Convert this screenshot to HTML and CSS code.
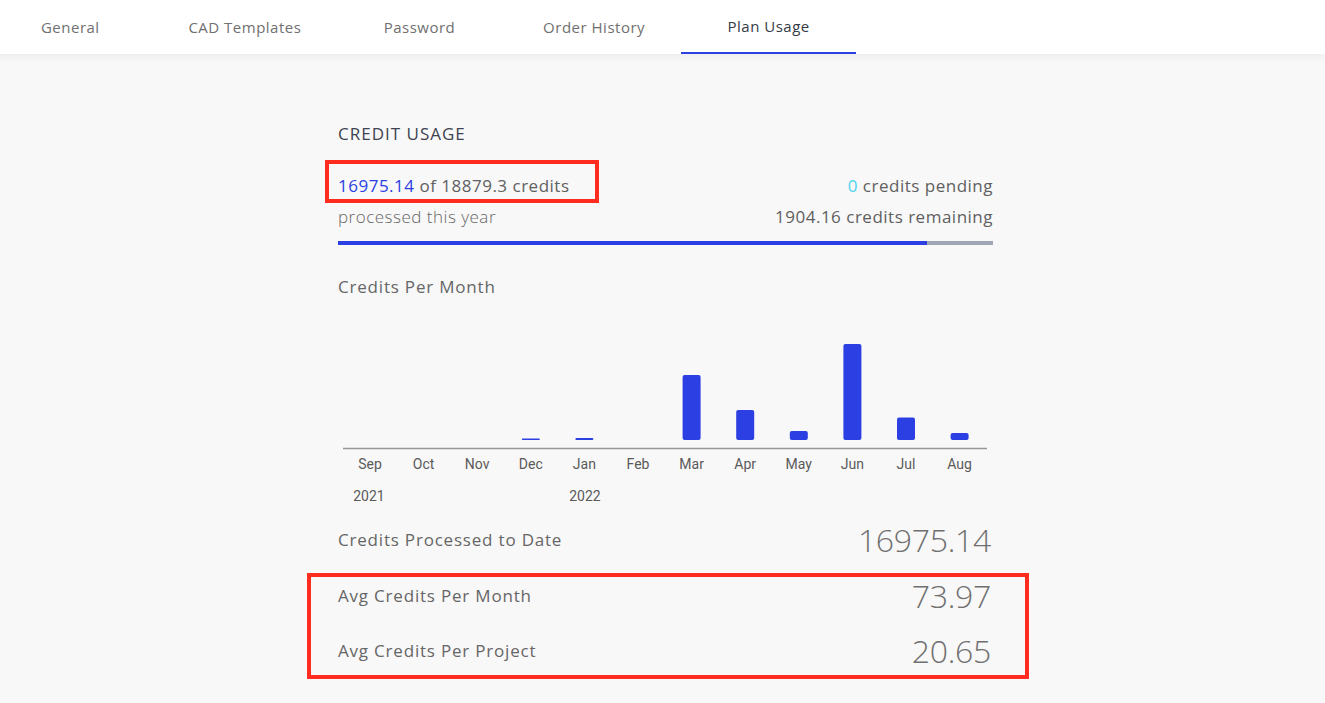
FILE: index.html
```html
<!DOCTYPE html>
<html lang="en">
<head>
<meta charset="UTF-8">
<meta name="viewport" content="width=device-width, initial-scale=1.0">
<title>Account Settings - Plan Usage</title>
<link rel="stylesheet" href="styles.css">
</head>
<body>

<nav class="tabs">
    <a class="tab">General</a>
    <a class="tab">CAD Templates</a>
    <a class="tab">Password</a>
    <a class="tab">Order History</a>
    <a class="tab active">Plan Usage</a>
</nav>

<main class="usage">
    <h2 class="usage-title">CREDIT USAGE</h2>

    <div class="summary-row">
        <span class="marked marked-small"><span class="used">16975.14</span> of 18879.3 credits</span>
        <span><span class="pending">0</span> credits pending</span>
    </div>
    <div class="summary-row sub">
        <span class="light">processed this year</span>
        <span>1904.16 credits remaining</span>
    </div>

    <div class="progress">
        <div class="progress-fill" style="width: 89.9%"></div>
    </div>

    <h3 class="chart-title">Credits Per Month</h3>

    <svg class="chart" width="655" height="185" viewBox="0 0 655 185">
        <g fill="#2c3fe3">
            <rect x="183.8" y="108.5" width="18" height="1.5" rx="0.7"/>
            <rect x="237.4" y="108" width="18" height="2" rx="1"/>
            <rect x="344.6" y="45" width="18" height="65" rx="2"/>
            <rect x="398.2" y="80" width="18" height="30" rx="2"/>
            <rect x="451.8" y="101" width="18" height="9" rx="2"/>
            <rect x="505.4" y="14" width="18" height="96" rx="2"/>
            <rect x="559" y="87.5" width="18" height="22.5" rx="2"/>
            <rect x="612.6" y="103" width="18" height="7" rx="2"/>
        </g>
        <line x1="5" y1="118.5" x2="649" y2="118.5" stroke="#999" stroke-width="1.5"/>
        <g class="axis-labels" text-anchor="middle">
            <text x="32" y="139">Sep</text>
            <text x="85.6" y="139">Oct</text>
            <text x="139.2" y="139">Nov</text>
            <text x="192.8" y="139">Dec</text>
            <text x="246.4" y="139">Jan</text>
            <text x="300" y="139">Feb</text>
            <text x="353.6" y="139">Mar</text>
            <text x="407.2" y="139">Apr</text>
            <text x="460.8" y="139">May</text>
            <text x="514.4" y="139">Jun</text>
            <text x="568" y="139">Jul</text>
            <text x="621.6" y="139">Aug</text>
            <text x="31" y="171">2021</text>
            <text x="247" y="171">2022</text>
        </g>
    </svg>

    <div class="stat">
        <span class="stat-label">Credits Processed to Date</span>
        <span class="stat-value">16975.14</span>
    </div>

    <div class="marked marked-wide">
        <div class="stat">
            <span class="stat-label">Avg Credits Per Month</span>
            <span class="stat-value">73.97</span>
        </div>
        <div class="stat">
            <span class="stat-label">Avg Credits Per Project</span>
            <span class="stat-value">20.65</span>
        </div>
    </div>
</main>

</body>
</html>
```

FILE: styles.css
```css
body {
    margin: 0;
    background: #f8f8f8;
    font-family: "Open Sans", Arial, sans-serif;
    color: #666;
    overflow: hidden;
}

/* top tab bar */
.tabs {
    display: flex;
    height: 54px;
    margin-left: -17px;
    background: #fff;
    box-shadow: 0 3px 8px rgba(0, 0, 0, 0.05);
    position: relative;
}

.tab {
    width: 174.6px;
    box-sizing: border-box;
    text-align: center;
    line-height: 54px;
    font-size: 15px;
    letter-spacing: 0.5px;
    color: #707070;
    cursor: pointer;
}

.tab.active {
    color: #333a45;
    border-bottom: 2px solid #2c3fe3;
    line-height: 52px;
}

.usage {
    width: 655px;
    margin-left: 338px;
    padding-top: 68px;
}

.usage-title {
    margin: 0;
    font-size: 17px;
    font-weight: 500;
    line-height: 24px;
    color: #3d4350;
    letter-spacing: 1px;
}

.summary-row {
    display: flex;
    justify-content: space-between;
    align-items: baseline;
    font-size: 17px;
    font-weight: 500;
    letter-spacing: 0.5px;
    color: #606060;
    margin-top: 14px;
}

.summary-row.sub {
    margin-top: 0;
    line-height: 28px;
}

.light {
    font-weight: 300;
    color: #666;
}

.used {
    color: #2c3fe3;
}

.pending {
    color: #4fd2ee;
}

/* red outline marks */
.marked {
    border: 4px solid #ff2c1f;
}

.marked-small {
    display: inline-block;
    margin-left: -13px;
    padding: 10px 25px 2px 9px;
    line-height: 23px;
}

.marked-wide {
    margin: 16px -36px 0 -31px;
    padding: 0 32px 7px 27px;
}

.progress {
    margin-top: 10px;
    height: 4px;
    background: #a0a6b4;
}

.progress-fill {
    height: 100%;
    background: #2c3fe3;
}

.chart-title {
    margin: 31px 0 0;
    font-size: 17px;
    font-weight: 500;
    line-height: 22px;
    letter-spacing: 0.8px;
    color: #666;
}

.chart {
    display: block;
    margin-top: 32px;
}

.axis-labels {
    font-family: Roboto, Arial, sans-serif;
    font-size: 14px;
    fill: #5a5a5a;
}

.stat {
    display: flex;
    justify-content: space-between;
    align-items: center;
    height: 36px;
    margin-top: 6px;
}

.marked .stat {
    margin-top: 0;
}

.marked .stat + .stat {
    margin-top: 19px;
}

.stat-label {
    font-size: 17px;
    font-weight: 500;
    letter-spacing: 0.8px;
    color: #666;
}

.stat-value {
    font-size: 32px;
    font-weight: 300;
    letter-spacing: -0.3px;
    color: #707070;
    margin-right: 2px;
}
```
